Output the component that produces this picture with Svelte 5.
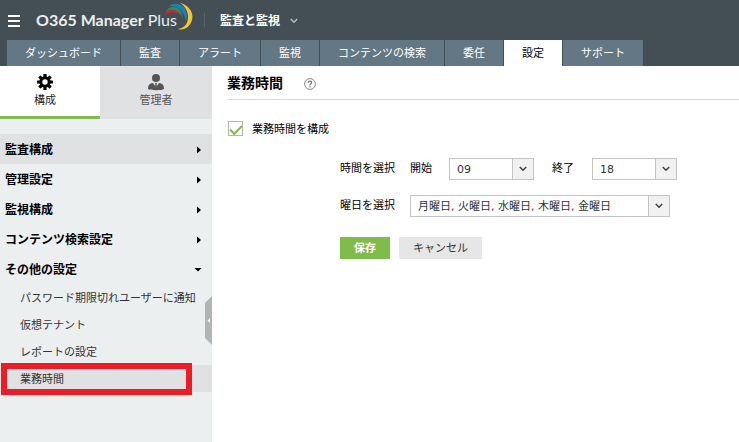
<script>
  const tabs = ['ダッシュボード', '監査', 'アラート', '監視', 'コンテンツの検索', '委任', '設定', 'サポート'];
  const sections = ['監査構成', '管理設定', '監視構成', 'コンテンツ検索設定', 'その他の設定'];
  const links = ['パスワード期限切れユーザーに通知', '仮想テナント', 'レポートの設定', '業務時間'];
  const hours = Array.from({ length: 24 }, (_, i) => String(i).padStart(2, '0'));

  let activeTab = $state('設定');
  let open = $state('その他の設定');
  let enabled = $state(true);
  let start = $state('09');
  let end = $state('18');
  let days = $state('月曜日, 火曜日, 水曜日, 木曜日, 金曜日');
</script>

{#snippet chevron()}
  <span class="arrow" aria-hidden="true">
    <svg width="8" height="6" viewBox="0 0 8 6"><path d="M0.8 1 L4 4.2 L7.2 1" fill="none" stroke="#444" stroke-width="1.6" /></svg>
  </span>
{/snippet}

<div class="page">
  <header>
    <div class="brandbar">
      <button class="burger" aria-label="Menu"><i></i><i></i><i></i></button>
      <a class="logo" href="#home">
        <span><b>O365 Manager</b> Plus</span>
        <svg width="30" height="28" viewBox="0 0 30 28" aria-hidden="true">
          <path d="M1 14 C5 5 14 4 18 14 C13 9 7 9 1 14Z" fill="#c7253e" />
          <path d="M2 10 C7 2 18 3 20 16 C16 8 9 5 2 10Z" fill="#1d9a57" />
          <path d="M6 4 C15 -2 27 5 23 19 C21 10 16 4 6 4Z" fill="#1b7fc0" />
          <path d="M17 1 C26 3 31 11 29 18 C27 25 21 29 15 27 C22 26 25 21 25 15 C25 9 22 4 17 1Z" fill="#f4c430" />
        </svg>
      </a>
      <button class="product">
        監査と監視
        <svg width="8" height="6" viewBox="0 0 8 6" aria-hidden="true"><path d="M0.8 1 L4 4.2 L7.2 1" fill="none" stroke="#b9c0c4" stroke-width="1.4" /></svg>
      </button>
    </div>
    <nav class="tabs">
      {#each tabs as tab}
        <button class:active={activeTab === tab} onclick={() => (activeTab = tab)}>{tab}</button>
      {/each}
    </nav>
  </header>

  <div class="body">
    <aside>
      <div class="modes">
        <button class="mode current">
          <svg width="16" height="16" viewBox="0 0 16 16" aria-hidden="true">
            <g fill="#000">
              {#each [0, 45, 90, 135] as angle}
                <rect x="6.4" y="0" width="3.2" height="16" rx="0.6" transform="rotate({angle} 8 8)" />
              {/each}
              <circle cx="8" cy="8" r="5.7" />
            </g>
            <circle cx="8" cy="8" r="2.7" fill="#fff" />
          </svg>
          <span>構成</span>
        </button>
        <button class="mode">
          <svg width="16" height="17" viewBox="0 0 16 17" aria-hidden="true">
            <circle cx="8" cy="4" r="4" fill="#555" />
            <path d="M0 15 C0 10.5 2 9.5 5 9 L8 13.5 L11 9 C14 9.5 16 10.5 16 15 C14 16.6 2 16.6 0 15Z" fill="#555" />
            <path d="M7 9 L9 9 L8.6 10.3 L9 12.5 L8 14 L7 12.5 L7.4 10.3Z" fill="#555" />
          </svg>
          <span>管理者</span>
        </button>
      </div>

      {#each sections as section, i}
        <button class="section" class:shaded={i === 0} onclick={() => (open = section)}>
          {section}
          {#if open === section}
            <svg width="8" height="8" viewBox="0 0 8 8" aria-hidden="true"><path d="M0.5 2 H7.5 L4 5.5Z" /></svg>
          {:else}
            <svg width="8" height="8" viewBox="0 0 8 8" aria-hidden="true"><path d="M3 0.5 L7 4 L3 7.5Z" /></svg>
          {/if}
        </button>
      {/each}
      <ul>
        {#each links as link, i}
          <li class:selected={i === 3}><a href="#settings">{link}</a></li>
        {/each}
      </ul>
      <button class="collapse" aria-label="Collapse">
        <svg width="7" height="49" viewBox="0 0 7 49"><path d="M7 0 L0 7 V42 L7 49Z" fill="#afb5b6" /><path d="M5 22 V27 L2.5 24.5Z" fill="#fff" /></svg>
      </button>
    </aside>

    <main>
      <div class="title">
        <h1>業務時間</h1>
        <button class="help" aria-label="Help">
          <svg width="12" height="12" viewBox="0 0 12 12"><circle cx="6" cy="6" r="5.4" fill="none" stroke="#888" /><path d="M4.3 4.7 C4.3 2.5 7.7 2.6 7.7 4.6 C7.7 5.8 6 5.8 6 7.3 M6 8.2 V9.5" fill="none" stroke="#777" stroke-width="1.3" /></svg>
        </button>
      </div>
      <label class="check"><input type="checkbox" bind:checked={enabled} /><span>業務時間を構成</span></label>

      <form onsubmit={(e) => e.preventDefault()}>
        <div class="row">
          <span class="name">時間を選択</span>
          <label class="sub" for="start">開始</label>
          <span class="hour">
            <select id="start" bind:value={start}>{#each hours as h}<option>{h}</option>{/each}</select>
            {@render chevron()}
          </span>
          <label class="sub second" for="end">終了</label>
          <span class="hour">
            <select id="end" bind:value={end}>{#each hours as h}<option>{h}</option>{/each}</select>
            {@render chevron()}
          </span>
        </div>
        <div class="row">
          <label class="name" for="days">曜日を選択</label>
          <span class="days">
            <select id="days" bind:value={days}><option>月曜日, 火曜日, 水曜日, 木曜日, 金曜日</option></select>
            {@render chevron()}
          </span>
        </div>
        <div class="actions">
          <button class="save" type="submit">保存</button>
          <button class="cancel" type="button">キャンセル</button>
        </div>
      </form>
    </main>
  </div>
</div>

<style>
  .page {
    display: flex;
    flex-direction: column;
    min-height: 100vh;
    background: #fff;
    color: #000;
    font: 11px/16px "DejaVu Sans", "Noto Sans CJK JP", sans-serif;
  }
  .page * { box-sizing: border-box; }
  button {
    margin: 0;
    padding: 0;
    border: 0;
    background: none;
    color: inherit;
    font: inherit;
    white-space: nowrap;
    cursor: pointer;
  }
  svg { display: block; flex: none; }
  a { color: inherit; text-decoration: none; }

  header { background: #434e55; color: #fff; }
  .brandbar { display: flex; align-items: center; height: 40px; padding-left: 8px; }
  .burger { display: flex; flex-direction: column; gap: 3px; width: 12px; padding-top: 2px; }
  .burger i { height: 2px; background: #fff; }
  .logo {
    display: flex;
    align-items: center;
    margin-left: 16px;
    font: 16px/20px Lato, sans-serif;
    color: #eceeef;
    white-space: nowrap;
  }
  .logo svg { margin: -8px 0 0 -14px; }
  .product {
    display: flex;
    align-items: center;
    gap: 10px;
    margin-left: 11px;
    padding: 2px 0 0 15px;
    border-left: 1px solid #566168;
    font-size: 12px;
    font-weight: bold;
    line-height: 12px;
  }
  .tabs { display: flex; gap: 1px; padding-left: 7px; }
  .tabs button { height: 26px; padding: 2px 18px 0; background: #637884; }
  .tabs .active { background: #fff; color: #000; }

  .body { display: flex; flex: 1; }
  aside { position: relative; flex: none; width: 212px; background: #ebeff0; }
  .modes { display: flex; margin-bottom: 15px; }
  .mode {
    display: flex;
    flex: 1;
    flex-direction: column;
    align-items: center;
    gap: 2px;
    height: 53px;
    padding-top: 8px;
    background: #e0e1e3;
    color: #555;
  }
  .current {
    flex: none;
    gap: 3px;
    width: 100px;
    padding-right: 10px;
    border-bottom: 3px solid #7fbc4a;
    background: #fff;
    color: #222;
  }
  .section {
    display: flex;
    align-items: center;
    justify-content: space-between;
    width: 100%;
    height: 30px;
    padding: 2px 10px 0 5px;
    font-size: 12px;
    font-weight: bold;
  }
  .shaded, .selected { background: #e0e1e3; }
  ul { margin: 0; padding: 0; list-style: none; }
  li { position: relative; height: 27px; padding: 1px 0 0 20px; line-height: 27px; color: #333; white-space: nowrap; }
  .selected::after {
    content: "";
    position: absolute;
    inset: -2px 20px -3px 1px;
    border: 6px solid #ed1c24;
  }
  .collapse { position: absolute; top: 230px; right: 0; }

  main { flex: 1; min-width: 0; padding-left: 15px; }
  .title {
    display: flex;
    align-items: center;
    gap: 21px;
    height: 34px;
    border-bottom: 1px solid #ddd;
  }
  h1 { margin: 0; font-size: 14px; line-height: 20px; }
  .help { padding-top: 2px; }
  .check { display: flex; gap: 9px; width: max-content; height: 15px; margin: 21px 0 0 1px; line-height: 17px; }
  .check input {
    display: grid;
    justify-content: center;
    appearance: none;
    width: 15px;
    height: 15px;
    margin: 0;
    padding-top: 3px;
    border: 1px solid #b5b5b5;
    background: #fff;
  }
  .check input:checked::before {
    content: "";
    width: 10px;
    height: 5px;
    border: solid #7fbc4a;
    border-width: 0 0 2px 2px;
    transform: rotate(-45deg);
  }
  form { display: flex; flex-direction: column; gap: 15px; margin: 22px 0 0 113px; }
  .row { display: flex; align-items: center; white-space: nowrap; }
  .name { width: 70px; }
  .sub { width: 39px; }
  .second { width: 40px; margin-left: 18px; }
  .days, .hour { display: grid; height: 22px; border: 1px solid #c4c4c4; background: #fff; }
  .hour { width: 85px; }
  .days { width: 260px; }
  select {
    grid-area: 1 / 1;
    appearance: none;
    min-width: 0;
    margin: 0;
    padding: 1px 22px 0 7px;
    border: 0;
    background: none;
    color: #333;
    font: inherit;
  }
  .arrow {
    grid-area: 1 / 1;
    justify-self: end;
    display: grid;
    place-items: center;
    width: 21px;
    border-left: 1px solid #c4c4c4;
    background: #f1f1f1;
    pointer-events: none;
  }
  .actions { display: flex; gap: 9px; margin-top: 5px; }
  .actions button { height: 22px; padding: 2px 14px 0; }
  .actions .save { background: #7fbc4a; color: #fff; font-weight: bold; }
  .actions .cancel { background: #e6e6e6; color: #333; }
</style>
